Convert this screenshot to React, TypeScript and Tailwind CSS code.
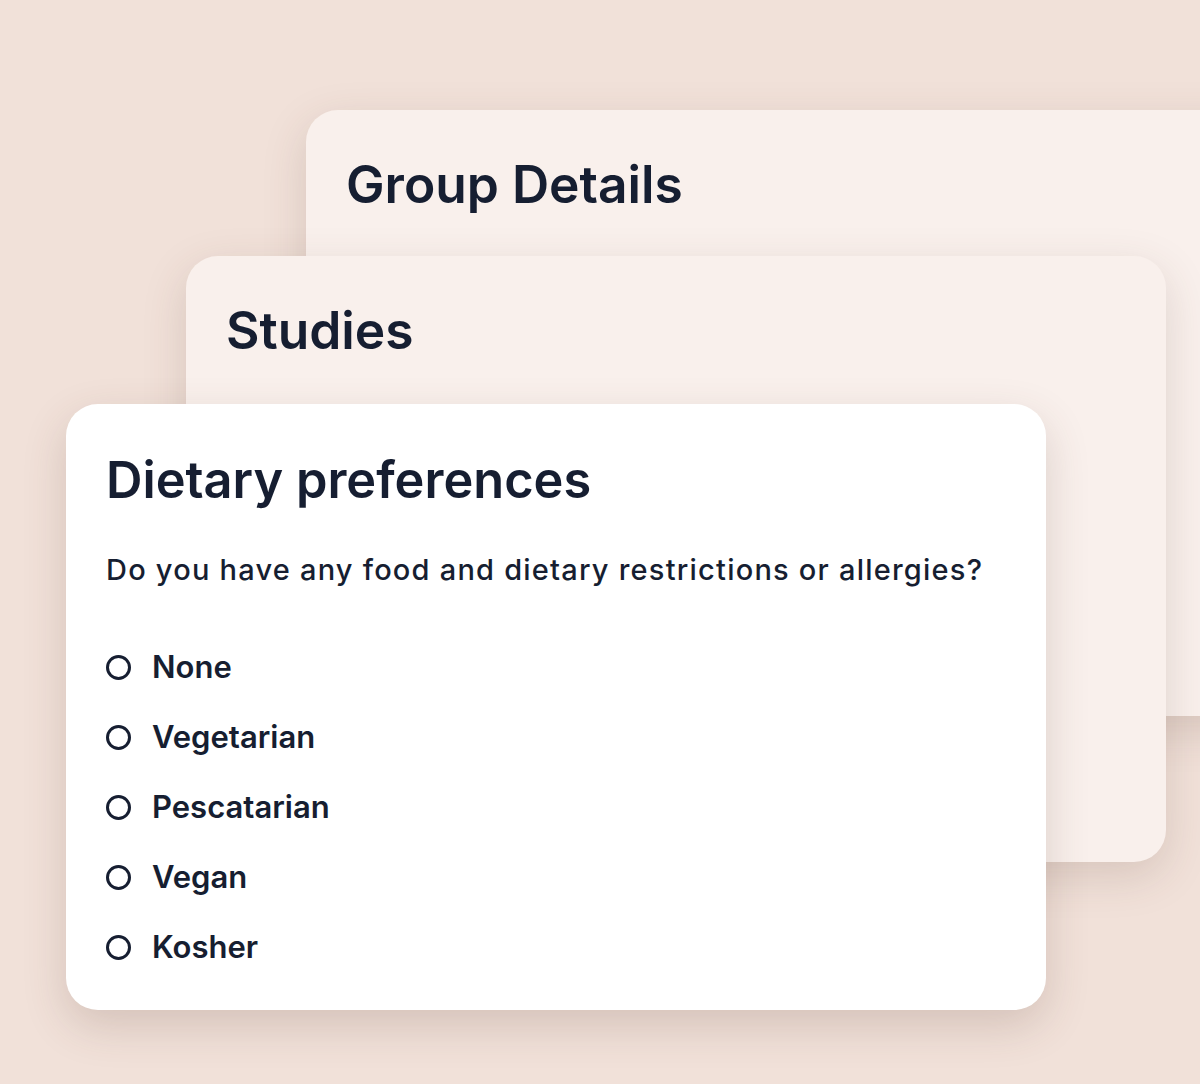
const options = ['None', 'Vegetarian', 'Pescatarian', 'Vegan', 'Kosher'];

function BackCard({ title, className }: { title: string; className: string }) {
  return (
    <div
      className={`[grid-area:1/1] w-[980px] h-[606px] rounded-[32px] bg-[#f9f0ec] px-10 pt-[44px] shadow-[0_14px_44px_rgba(90,60,50,0.17)] ${className}`}
    >
      <h2 className="text-[51.5px] leading-[1.2] font-semibold text-[#161e31]">{title}</h2>
    </div>
  );
}

export default function App() {
  return (
    <div
      className="w-[1200px] h-[1084px] overflow-hidden bg-[#f1e1d9]"
      style={{ fontFamily: 'Inter, "Noto Sans", sans-serif' }}
    >
      <div className="grid items-start justify-items-start">
        <BackCard title="Group Details" className="ml-[306px] mt-[110px]" />
        <BackCard title="Studies" className="ml-[186px] mt-[256px]" />
        <div className="[grid-area:1/1] ml-[66px] mt-[404px] w-[980px] h-[606px] rounded-[32px] bg-white px-10 pt-[46px] shadow-[0_16px_44px_rgba(90,60,50,0.19)]">
          <h2 className="text-[50.5px] leading-[1.2] font-semibold text-[#161e31]">Dietary preferences</h2>
          <p className="mt-[42px] text-[29px] leading-[1.2] font-medium tracking-[0.042em] text-[#161e31]">
            Do you have any food and dietary restrictions or allergies?
          </p>
          <ul className="mt-[60px] flex flex-col gap-[32px]">
            {options.map(o => (
              <li key={o} className="flex items-center gap-[21px] h-[38px]">
                <span className="mt-[2px] w-[25px] h-[25px] rounded-full border-[3.7px] border-[#161e31] shrink-0" />
                <span className="text-[31px] leading-[1.2] font-semibold text-[#161e31]">{o}</span>
              </li>
            ))}
          </ul>
        </div>
      </div>
    </div>
  );
}
